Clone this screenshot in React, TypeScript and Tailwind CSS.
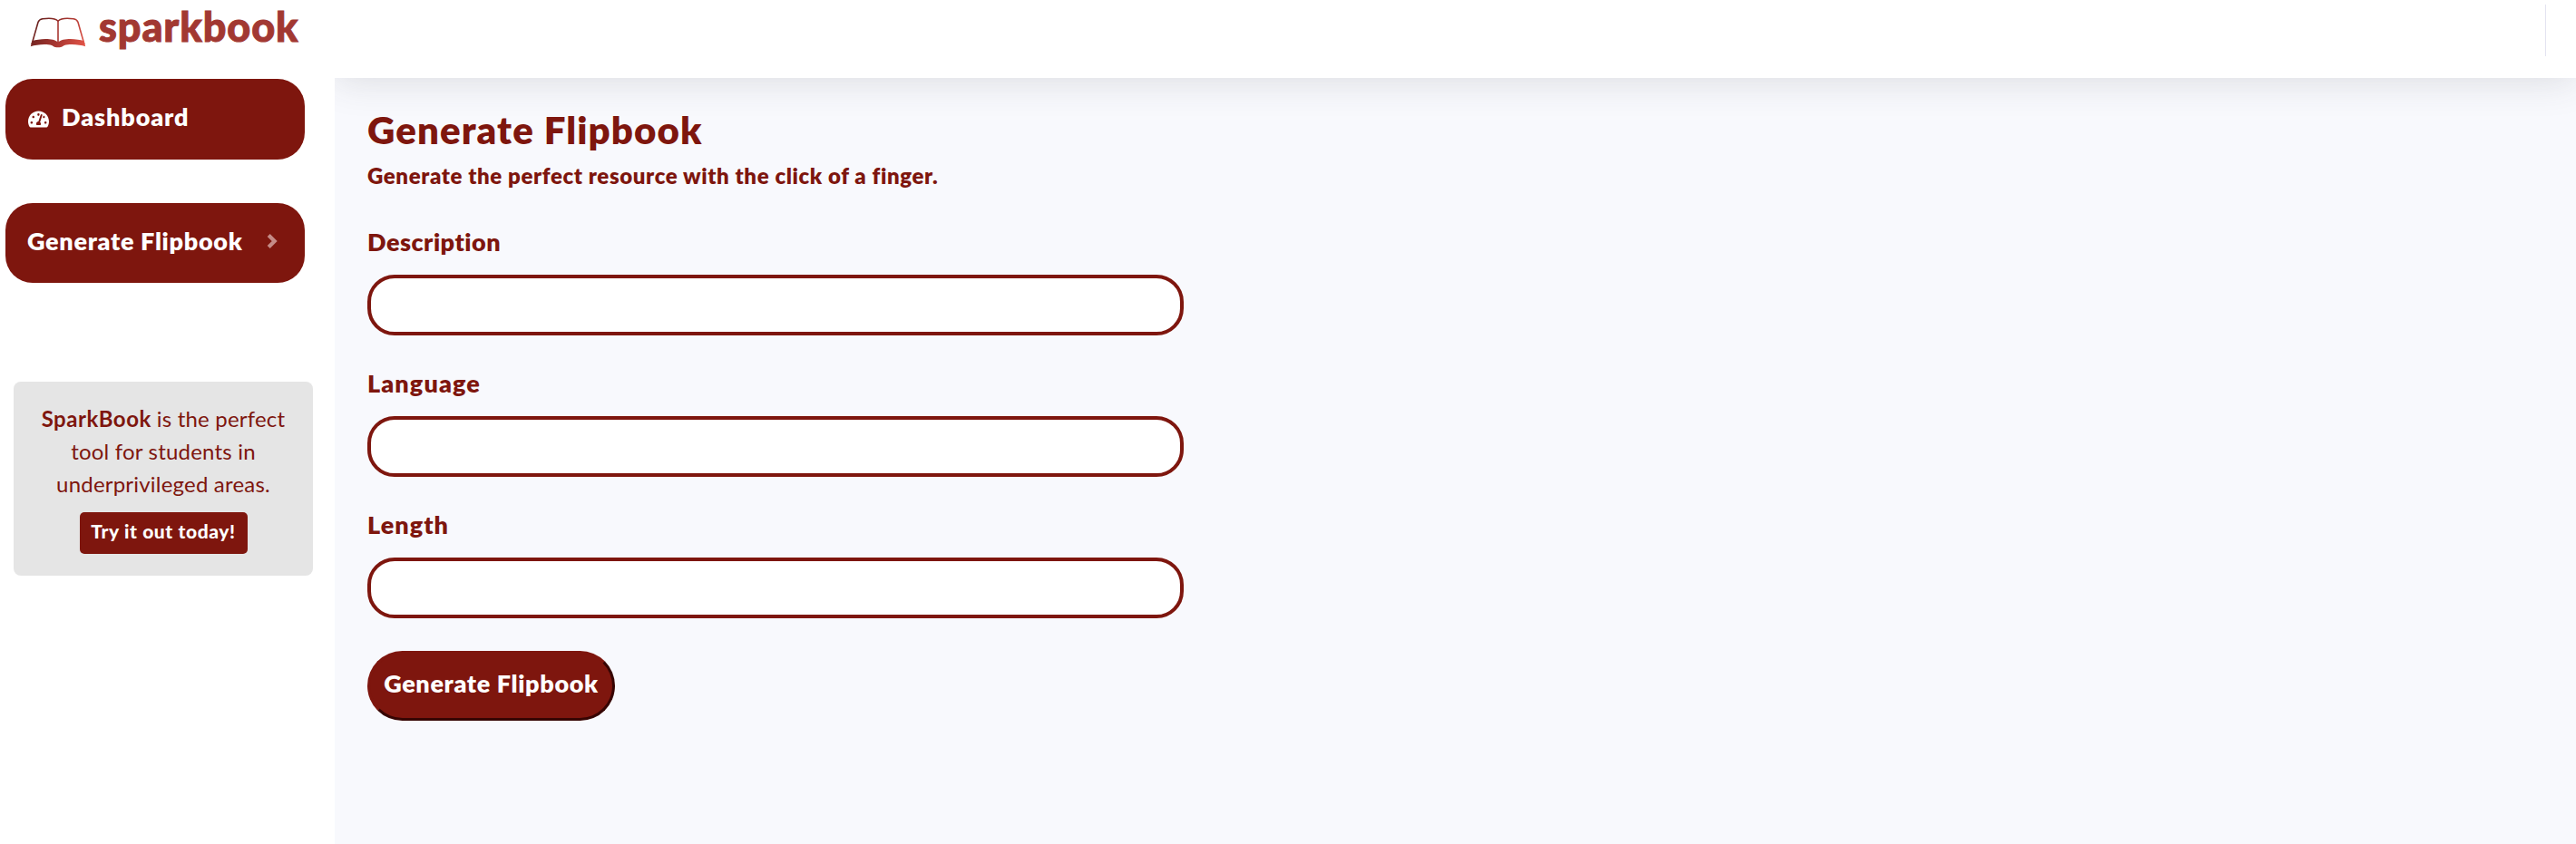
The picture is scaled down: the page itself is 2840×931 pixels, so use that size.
import React from "react";
import { FaTachometerAlt } from "react-icons/fa";

function BookLogo() {
  return (
    <svg viewBox="0 0 62 34" className="h-[34px] w-[62px] shrink-0" fill="none">
      <defs>
        <linearGradient id="book" x1="0" y1="0" x2="62" y2="34" gradientUnits="userSpaceOnUse">
          <stop offset="0.1" stopColor="#64201d" />
          <stop offset="0.55" stopColor="#a83631" />
          <stop offset="1" stopColor="#e8574a" />
        </linearGradient>
      </defs>
      <path
        d="M2 30 L9 5.5 C10 2.6 11.5 2.2 14 1.8 C20 0.9 27.5 0.8 31 4.2 C34.5 0.8 42 0.9 48 1.8 C50.5 2.2 52 2.6 53 5.5 L60 30"
        stroke="url(#book)"
        strokeWidth="1.6"
      />
      <path d="M31 4V28" stroke="#a83631" strokeWidth="1.6" />
      <path
        d="M2.4 26.2 C10 23.6 25.5 22.4 31 27.5 C36.5 22.4 52 23.6 59.6 26.2 L61.2 32.2 C55 30 43.5 29 38 31 C36.5 31.6 36 33.3 31 33.3 C26 33.3 25.5 31.6 24 31 C18.5 29 7 30 0.8 32.2 Z"
        fill="url(#book)"
      />
    </svg>
  );
}

function Sidebar() {
  return (
    <aside className="relative z-20 flex w-[369px] shrink-0 flex-col bg-white">
      <a className="flex h-[87px] items-start pl-[33px]">
        <span className="pt-[19px]">
          <BookLogo />
        </span>
        <span className="pl-[14px] text-[45px] leading-[59px] font-black tracking-[0.9px] text-[#a23832] [-webkit-text-stroke:1px_#a23832]">
          sparkbook
        </span>
      </a>
      <nav className="flex flex-col gap-12 pl-1.5">
        <a className="flex h-[89px] w-[330px] items-center rounded-[30px] bg-[#7e160e] pl-[25px] text-white">
          <FaTachometerAlt className="h-[21px] w-[23px]" />
          <span className="pb-[6px] pl-[14px] text-[27px] leading-[40px] font-extrabold tracking-[0.9px]">Dashboard</span>
        </a>
        <a className="flex h-[88px] w-[330px] items-center rounded-[30px] bg-[#7e160e] pl-[24px] text-white">
          <span className="w-[264px] pb-[5px] text-[27px] leading-[40px] font-extrabold tracking-[0.7px] whitespace-nowrap">
            Generate Flipbook
          </span>
          <svg viewBox="0 0 12 18" className="mb-[4px] h-[18px] w-[12px]" fill="none">
            <path d="M2.2 2.5 L8.7 9 L2.2 15.5" stroke="#c58b87" strokeWidth="4.2" />
          </svg>
        </a>
      </nav>
      <div className="mt-[109px] ml-[15px] flex h-[214px] w-[330px] flex-col items-center rounded-[8px] bg-[#e5e5e5] pt-[23px] text-[#7e160e]">
        <p className="flex flex-col items-center text-[24px] leading-9 tracking-[0.2px]">
          <span className="flex gap-[6px]">
            <strong className="font-bold tracking-[0.5px]">SparkBook</strong>
            <span>is the perfect</span>
          </span>
          <span>tool for students in</span>
          <span>underprivileged areas.</span>
        </p>
        <a className="mt-[13px] flex h-[46px] w-[185px] items-center justify-center rounded-[5px] bg-[#7e160e] pb-1 text-[21px] font-black tracking-[0.6px] text-white">
          Try it out today!
        </a>
      </div>
    </aside>
  );
}

function Field({ label, tracking }: { label: string; tracking: string }) {
  return (
    <label className="flex flex-col gap-4">
      <span className={`text-[27px] leading-[40px] font-extrabold ${tracking}`}>{label}</span>
      <input className="h-[67px] w-[900px] rounded-[30px] border-4 border-[#7e160e] bg-white px-5 text-2xl outline-none" />
    </label>
  );
}

export default function App() {
  return (
    <div className="flex h-[931px] w-full overflow-hidden bg-white font-['Lato','Liberation_Sans',sans-serif]">
      <Sidebar />
      <div className="flex min-w-0 flex-1 flex-col bg-[#f8f9fd]">
        <header className="flex h-[86px] shrink-0 justify-end bg-white pt-[5px] pr-[33px] shadow-[0_3.6px_42px_rgba(58,59,69,0.15)]">
          <div className="h-[57px] w-px bg-[#e3e3f0]" />
        </header>
        <main className="relative flex flex-col items-start pt-8 pl-9 text-[#7e160e]">
          <h1 className="text-[42px] leading-[50px] font-extrabold tracking-[1.1px]">Generate Flipbook</h1>
          <p className="mt-2 text-[24px] leading-9 font-extrabold tracking-[0.62px]">
            Generate the perfect resource with the click of a finger.
          </p>
          <form className="mt-[35px] flex flex-col items-start gap-[33px]">
            <Field label="Description" tracking="tracking-[0.5px]" />
            <Field label="Language" tracking="tracking-[1.1px]" />
            <Field label="Length" tracking="tracking-[1px]" />
            <button
              type="button"
              className="mt-[3px] h-[77px] w-[273px] rounded-[39px] border-3 border-t-[#7e160e] border-r-[#360503] border-b-[#360503] border-l-[#7e160e] bg-[#7e160e] pb-1 text-[27px] font-extrabold tracking-[0.65px] whitespace-nowrap text-white"
            >
              Generate Flipbook
            </button>
          </form>
        </main>
      </div>
    </div>
  );
}
